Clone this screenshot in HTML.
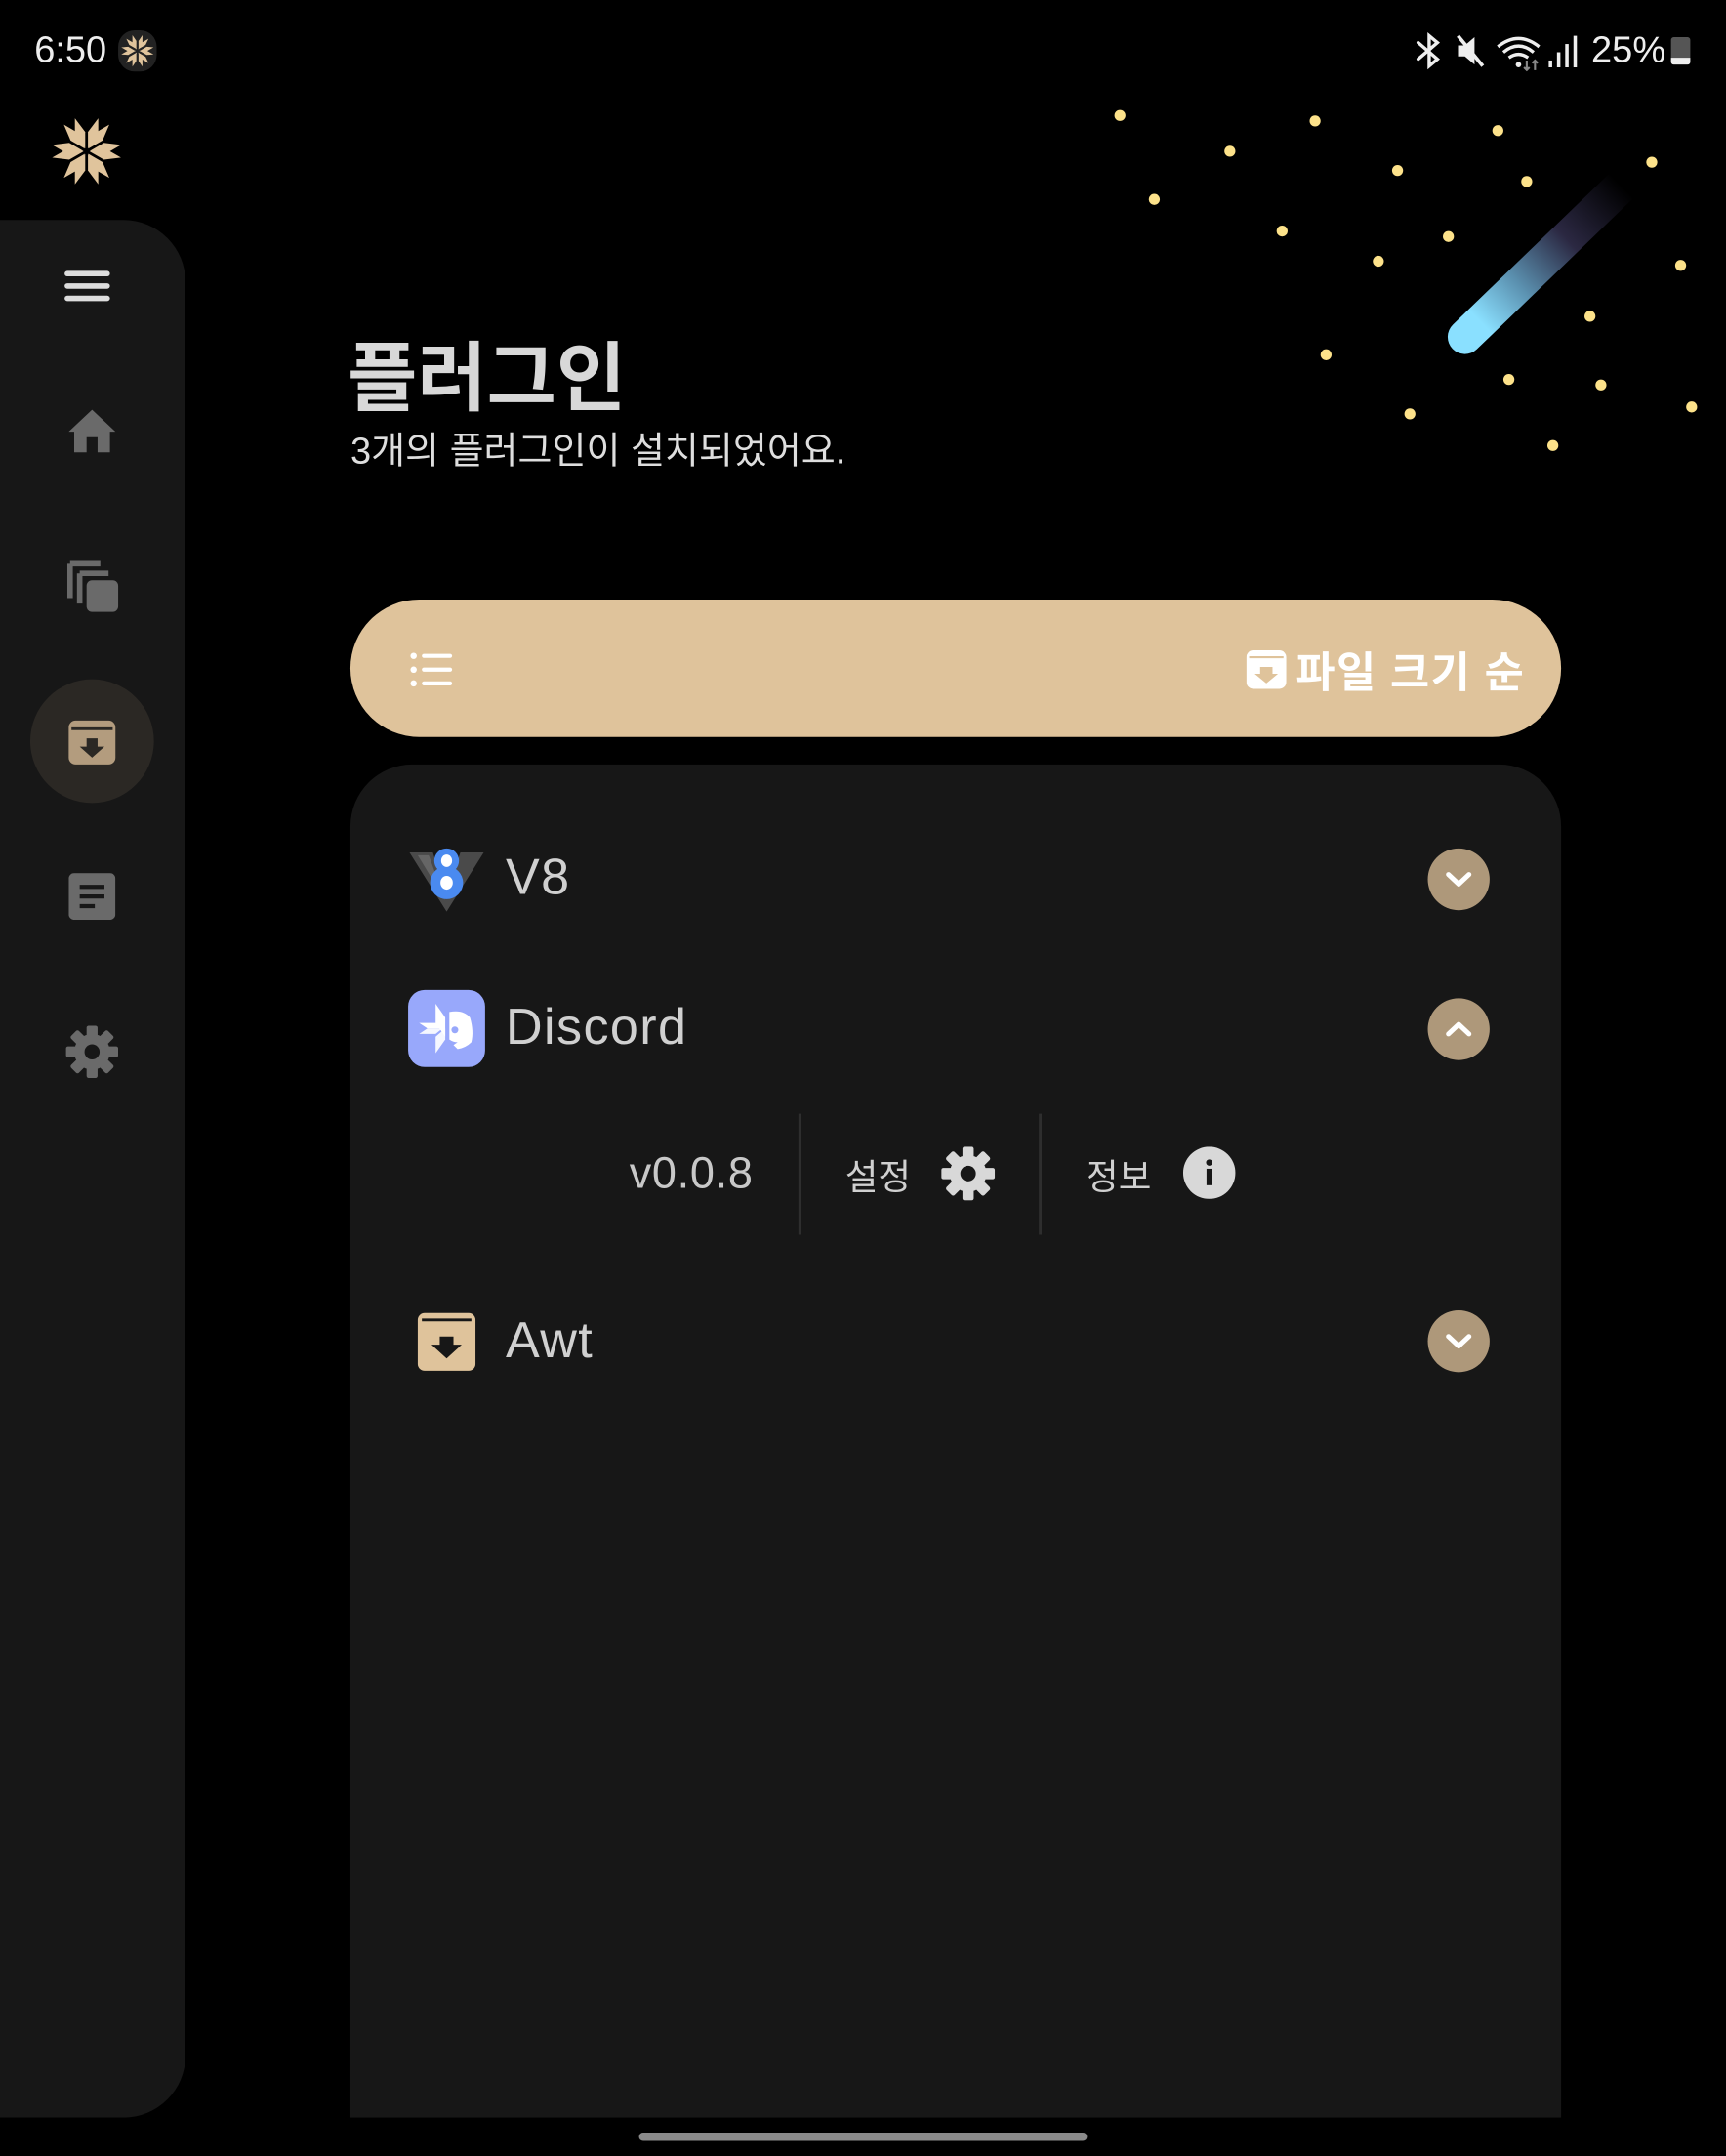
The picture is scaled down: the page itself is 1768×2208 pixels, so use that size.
<!DOCTYPE html>
<html><head><meta charset="utf-8"><style>
html,body{margin:0;padding:0;background:#000;overflow:hidden;width:1768px;height:2208px}
#w{position:absolute;left:0;top:0;width:1256px;height:1568px;transform:scale(1.40764,1.40816);transform-origin:0 0;font-family:"Liberation Sans","Noto Sans CJK KR",sans-serif;color:#dcdcdc}
.a{position:absolute}
</style></head><body><div id="w">
<div class="a" style="left:25px;top:21px;font-size:27px;color:#eee">6:50</div>
<div class="a" style="left:86px;top:22px;width:28px;height:30px;border-radius:12px;background:#222"></div>
<svg class="a" style="left:87px;top:24px" width="26" height="26" viewBox="-50 -50 100 100"><g fill="#e0c49c"><g id="p"><path d="M-3 -4 L-14 -20 L-14 -44 L-3 -28Z"/><path d="M3 -4 L14 -20 L14 -44 L3 -28Z"/></g><use href="#p" transform="rotate(60)"/><use href="#p" transform="rotate(120)"/><use href="#p" transform="rotate(180)"/><use href="#p" transform="rotate(240)"/><use href="#p" transform="rotate(300)"/></g></svg>
<svg class="a" style="left:1028px;top:22px" width="200" height="30" viewBox="0 0 200 30">
<g stroke="#eee" stroke-width="2.4" fill="none" stroke-linecap="round"><path d="M4 9 L18 21 L12 26 L12 4 L18 9 L4 21"/></g>
<path d="M33 11 h5 l7 -6 v20 l-7 -6 h-5z" fill="#eee"/><path d="M33 4 L51 26" stroke="#eee" stroke-width="2.6"/>
<g stroke="#eee" stroke-width="2.4" fill="none"><path d="M62 12 Q77 0 92 12"/><path d="M66 16 Q77 7 88 16"/><path d="M70 20 Q77 15 84 20"/></g><circle cx="77" cy="25" r="2" fill="#eee"/>
<path d="M83 22 v7 M81 27 l2 2 l2 -2 M89 29 v-7 M87 24 l2 -2 l2 2" stroke="#888" stroke-width="1.5" fill="none"/>
<g fill="#eee"><rect x="99" y="22" width="2.5" height="5"/><rect x="105" y="16" width="2.5" height="11"/><rect x="111" y="10" width="2.5" height="17"/><rect x="117" y="4" width="2.5" height="23"/></g>
</svg>
<div class="a" style="left:1158px;top:21px;font-size:27px;color:#eee">25%</div>
<div class="a" style="left:1216px;top:27px;width:14px;height:20px;border-radius:2px;background:#555"><div style="position:absolute;bottom:0;left:0;right:0;height:5px;background:#eee;border-radius:0 0 2px 2px"></div></div>
<svg class="a" style="left:38px;top:85px" width="50" height="50" viewBox="-50 -50 100 100"><g fill="#e0c49c"><g id="q"><path d="M-2 -4 L-17 -24 L-17 -48 L-2 -28Z"/><path d="M2 -4 L17 -24 L17 -48 L2 -28Z"/></g><use href="#q" transform="rotate(60)"/><use href="#q" transform="rotate(120)"/><use href="#q" transform="rotate(180)"/><use href="#q" transform="rotate(240)"/><use href="#q" transform="rotate(300)"/></g></svg>
<div class="a" style="left:0;top:160px;width:135px;height:1380px;background:#171717;border-radius:0 45px 45px 0"></div>
<div class="a" style="left:47px;top:197px;width:33px;height:4px;background:#ddd;border-radius:2px;box-shadow:0 9px 0 #ddd,0 18px 0 #ddd"></div>
<svg class="a" style="left:49px;top:296px" width="36" height="34" viewBox="0 0 36 34"><path d="M18 2 L35 18 H31 V33 H22 V22 H14 V33 H5 V18 H1Z" fill="#6a6a6a"/></svg>
<svg class="a" style="left:47px;top:407px" width="40" height="40" viewBox="0 0 40 40"><path d="M4 3 V28 M4 3 H26" stroke="#6a6a6a" stroke-width="4" fill="none"/><path d="M11 10 V32 M11 10 H32" stroke="#6a6a6a" stroke-width="4" fill="none"/><rect x="16" y="15" width="23" height="23" rx="4" fill="#6a6a6a"/></svg>
<div class="a" style="left:22px;top:494px;width:90px;height:90px;border-radius:50%;background:#2b2824"></div>
<svg class="a" style="left:49px;top:521px" width="36" height="36" viewBox="0 0 36 36"><rect x="1" y="3" width="34" height="32" rx="5" fill="#b39c7e"/><path d="M3 9 H33" stroke="#2b2824" stroke-width="2"/><path d="M14 16 h8 v6 h5 l-9 8 l-9 -8 h5z" fill="#2b2824"/></svg>
<svg class="a" style="left:50px;top:635px" width="34" height="34" viewBox="0 0 34 34"><rect x="0" y="0" width="34" height="34" rx="4" fill="#6a6a6a"/><path d="M8 10 H26 M8 17 H26 M8 24 H19" stroke="#171717" stroke-width="3"/></svg>
<svg class="a" style="left:48px;top:746px" width="38" height="38" viewBox="-19 -19 38 38"><g fill="#6a6a6a"><circle r="13"/><g id="t"><rect x="-4" y="-19" width="8" height="9" rx="1.5"/></g><use href="#t" transform="rotate(45)"/><use href="#t" transform="rotate(90)"/><use href="#t" transform="rotate(135)"/><use href="#t" transform="rotate(180)"/><use href="#t" transform="rotate(225)"/><use href="#t" transform="rotate(270)"/><use href="#t" transform="rotate(315)"/></g><circle r="5.5" fill="#171717"/></svg>
<svg class="a" style="left:0;top:0" width="1256" height="340">
<defs><linearGradient id="g" x1="1066" y1="245" x2="1180" y2="135" gradientUnits="userSpaceOnUse"><stop offset="0.1" stop-color="#8ae0ff"/><stop offset="0.35" stop-color="#5a8fae"/><stop offset="0.65" stop-color="#2b2842"/><stop offset="1" stop-color="#000"/></linearGradient></defs>
<path d="M1066 245 L1180 135" stroke="url(#g)" stroke-width="25" stroke-linecap="round"/>
<g fill="#fde28a"><circle cx="815" cy="84" r="4"/><circle cx="895" cy="110" r="4"/><circle cx="957" cy="88" r="4"/><circle cx="1090" cy="95" r="4"/><circle cx="1017" cy="124" r="4"/><circle cx="1111" cy="132" r="4"/><circle cx="1202" cy="118" r="4"/><circle cx="840" cy="145" r="4"/><circle cx="933" cy="168" r="4"/><circle cx="1054" cy="172" r="4"/><circle cx="1003" cy="190" r="4"/><circle cx="1223" cy="193" r="4"/><circle cx="1157" cy="230" r="4"/><circle cx="965" cy="258" r="4"/><circle cx="1098" cy="276" r="4"/><circle cx="1165" cy="280" r="4"/><circle cx="1026" cy="301" r="4"/><circle cx="1231" cy="296" r="4"/><circle cx="1130" cy="324" r="4"/></g></svg>
<div class="a" style="left:253px;top:230px;font-size:55px;font-weight:bold;color:#d8d8d8">플러그인</div>
<div class="a" style="left:255px;top:306px;font-size:27px;color:#dedede">3개의 플러그인이 설치되었어요.</div>
<div class="a" style="left:255px;top:436px;width:881px;height:100px;border-radius:50px;background:#dfc39b"></div>
<svg class="a" style="left:298px;top:474px" width="32" height="26" viewBox="0 0 32 26"><g fill="#fff"><circle cx="3" cy="3" r="2.3"/><circle cx="3" cy="13" r="2.3"/><circle cx="3" cy="23" r="2.3"/><rect x="9" y="1.5" width="22" height="3" rx="1.5"/><rect x="9" y="11.5" width="22" height="3" rx="1.5"/><rect x="9" y="21.5" width="22" height="3" rx="1.5"/></g></svg>
<svg class="a" style="left:907px;top:472px" width="30" height="30" viewBox="0 0 30 30"><rect x="0" y="1" width="29" height="28" rx="5" fill="#fff"/><path d="M2 6 H27" stroke="#dfc39b" stroke-width="1.5"/><path d="M10 13 h9 v5 h4 l-8.5 7 l-8.5 -7 h4z" fill="#dfc39b"/></svg>
<div class="a" style="left:943px;top:464px;font-size:31px;font-weight:bold;color:#fff;letter-spacing:1px">파일 크기 순</div>
<div class="a" style="left:255px;top:556px;width:881px;height:1000px;border-radius:45px 45px 0 0;background:#171717"></div>
<div class="a" style="left:0;top:1540px;width:1256px;height:28px;background:#000"></div>
<svg class="a" style="left:298px;top:615px" width="54" height="48" viewBox="0 0 54 48"><path d="M0 5 H17 L27 36 L37 5 H54 L27 48Z" fill="#4a4a4a"/><path d="M6 7 H14 L26 40 Z" fill="#666"/><g fill="#4a8af0"><circle cx="27" cy="11" r="9"/><circle cx="27" cy="27" r="12"/></g><ellipse cx="27" cy="11" rx="4" ry="4.5" fill="#fff"/><ellipse cx="27" cy="27" rx="4.5" ry="5" fill="#fff"/></svg>
<div class="a" style="left:368px;top:617px;font-size:37px;color:#d0d0d0;letter-spacing:1px">V8</div>
<div class="a" style="left:1039px;top:617px;width:45px;height:45px;border-radius:50%;background:#ae987a"></div>
<svg class="a" style="left:1039px;top:617px" width="45" height="45"><path d="M15 19 L22.5 26 L30 19" stroke="#fff" stroke-width="3.5" fill="none" stroke-linecap="round" stroke-linejoin="round"/></svg>
<div class="a" style="left:1039px;top:726px;width:45px;height:45px;border-radius:50%;background:#ae987a"></div>
<svg class="a" style="left:1039px;top:726px" width="45" height="45"><path d="M15 26 L22.5 19 L30 26" stroke="#fff" stroke-width="3.5" fill="none" stroke-linecap="round" stroke-linejoin="round"/></svg>
<div class="a" style="left:1039px;top:953px;width:45px;height:45px;border-radius:50%;background:#ae987a"></div>
<svg class="a" style="left:1039px;top:953px" width="45" height="45"><path d="M15 19 L22.5 26 L30 19" stroke="#fff" stroke-width="3.5" fill="none" stroke-linecap="round" stroke-linejoin="round"/></svg>
<div class="a" style="left:297px;top:720px;width:56px;height:56px;border-radius:12px;background:#98a8fb"></div>
<svg class="a" style="left:297px;top:720px" width="56" height="56" viewBox="0 0 56 56"><g fill="#fff"><path d="M20 10 L27 20 L27 34 L20 24Z"/><path d="M20 46 L27 36 L27 28 L20 34Z" opacity=".9"/><path d="M8 24 H20 L25 28 H14Z"/><path d="M8 32 H20 L25 28 H14Z" opacity=".9"/><path d="M30 16 Q40 14 45 20 Q48 30 46 38 Q42 42 36 43 L33 40 L36 38 Q33 38 30 36Z"/></g><circle cx="34" cy="29" r="2.5" fill="#98a8fb"/></svg>
<div class="a" style="left:368px;top:726px;font-size:37px;color:#d0d0d0;letter-spacing:1px">Discord</div>
<div class="a" style="left:458px;top:835px;font-size:32px;color:#c8c8c8;letter-spacing:0.5px">v0.0.8</div>
<div class="a" style="left:581px;top:810px;width:2px;height:88px;background:#2e2e2e"></div>
<div class="a" style="left:756px;top:810px;width:2px;height:88px;background:#2e2e2e"></div>
<div class="a" style="left:615px;top:836px;font-size:26px;color:#d0d0d0">설정</div>
<svg class="a" style="left:685px;top:834px" width="39" height="39" viewBox="-19 -19 38 38"><g fill="#d8d8d8"><circle r="13"/><g id="u"><rect x="-4" y="-19" width="8" height="9" rx="1.5"/></g><use href="#u" transform="rotate(45)"/><use href="#u" transform="rotate(90)"/><use href="#u" transform="rotate(135)"/><use href="#u" transform="rotate(180)"/><use href="#u" transform="rotate(225)"/><use href="#u" transform="rotate(270)"/><use href="#u" transform="rotate(315)"/></g><circle r="5.5" fill="#171717"/></svg>
<div class="a" style="left:790px;top:836px;font-size:26px;color:#d0d0d0">정보</div>
<svg class="a" style="left:861px;top:834px" width="38" height="38" viewBox="0 0 38 38"><circle cx="19" cy="19" r="19" fill="#d8d8d8"/><circle cx="19" cy="11.5" r="2.3" fill="#171717"/><rect x="17" y="16" width="4" height="12" fill="#171717"/></svg>
<svg class="a" style="left:303px;top:954px" width="44" height="44" viewBox="0 0 44 44"><rect x="1" y="1" width="42" height="42" rx="5" fill="#dfc39b"/><path d="M4 6 H40" stroke="#171717" stroke-width="2"/><path d="M17 18 h10 v6 h6 l-11 10 l-11 -10 h6z" fill="#171717"/></svg>
<div class="a" style="left:368px;top:954px;font-size:37px;color:#d0d0d0;letter-spacing:1px">Awt</div>
<div class="a" style="left:465px;top:1551px;width:326px;height:6px;border-radius:3px;background:#8a8a8a"></div>
</div></body></html>
